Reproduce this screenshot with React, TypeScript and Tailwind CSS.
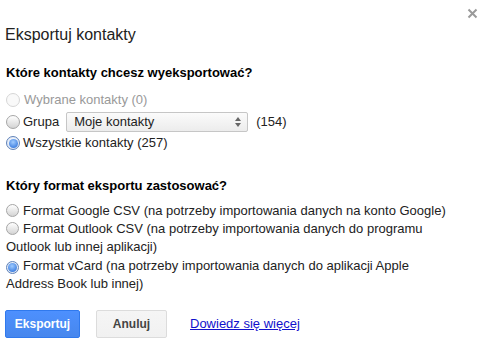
import React from 'react';

function Radio({ checked = false, disabled = false, size = 13 }: { checked?: boolean; disabled?: boolean; size?: number }) {
  const sz = size === 14 ? 'w-[14px] h-[14px]' : 'w-[13px] h-[13px]';
  if (checked) {
    return (
      <span className={`inline-flex ${sz} rounded-full border border-[#5f82b8] bg-[radial-gradient(circle_at_50%_40%,#ffffff,#cfdcf0)] items-center justify-center shrink-0 align-[-2px]`}>
        <span className="w-[9px] h-[9px] rounded-full bg-[radial-gradient(circle_at_45%_35%,#9fcbff,#1f66d6)]" />
      </span>
    );
  }
  return (
    <span
      className={
        disabled
          ? `inline-block ${sz} rounded-full border border-[#d6d6d6] bg-[#f9f9f9] shrink-0 align-[-2px]`
          : `inline-block ${sz} rounded-full border border-[#a6a6a6] bg-[linear-gradient(#ffffff,#d4d4d4)] shrink-0 align-[-2px]`
      }
    />
  );
}

export default function App() {
  return (
    <div
      className="relative w-[484px] h-[345px] bg-white text-[13px] text-[#222] overflow-hidden"
      style={{ fontFamily: '"Liberation Sans", Arial, sans-serif' }}
    >
      <button className="absolute right-[6px] top-[8px] w-[11px] h-[11px]">
        <svg viewBox="0 0 11 11" width="11" height="11">
          <path d="M1.5 1.5 L9.5 9.5 M9.5 1.5 L1.5 9.5" stroke="#9a9a9a" strokeWidth="2" />
        </svg>
      </button>

      <div className="pl-[6px] pr-[30px] pt-[25px]">
        <h1 className="text-[16px] leading-[20px] text-[#222] font-normal -ml-[1px]">Eksportuj kontakty</h1>

        <h2 className="mt-[19px] font-bold leading-[18px] text-[#000]">Które kontakty chcesz wyeksportować?</h2>

        <div className="mt-[8px] flex flex-col">
          <label className="flex items-center h-[20px] text-[#999]">
            <Radio disabled size={14} />
            <span className="ml-[4px]">Wybrane kontakty (0)</span>
          </label>
          <label className="flex items-center h-[23px]">
            <Radio size={14} />
            <span className="ml-[3px]">Grupa</span>
            <span className="ml-[7px] w-[182px] h-[20px] border border-[#c6c6c6] rounded-[2px] bg-[linear-gradient(#fbfbfb,#ececec)] flex items-center justify-between pl-[7px] pr-[6px]">
              <span>Moje kontakty</span>
              <svg width="6" height="10" viewBox="0 0 6 10">
                <path d="M0 4 L3 0 L6 4 Z M0 6 L3 10 L6 6 Z" fill="#666" />
              </svg>
            </span>
            <span className="ml-[8px]">(154)</span>
          </label>
          <label className="flex items-center h-[20px]">
            <Radio checked size={14} />
            <span className="ml-[3px]">Wszystkie kontakty (257)</span>
          </label>
        </div>

        <h2 className="mt-[24px] font-bold leading-[18px] text-[#000]">Który format eksportu zastosować?</h2>

        <div className="mt-[7px] leading-[18px]">
          <label className="block">
            <Radio />
            <span className="ml-[4px]">Format Google CSV (na potrzeby importowania danych na konto Google)</span>
          </label>
          <label className="block">
            <Radio />
            <span className="ml-[4px]">Format Outlook CSV (na potrzeby importowania danych do programu Outlook lub innej aplikacji)</span>
          </label>
          <label className="block mt-[1px]">
            <Radio checked />
            <span className="ml-[4px]">Format vCard (na potrzeby importowania danych do aplikacji Apple Address Book lub innej)</span>
          </label>
        </div>

        <div className="mt-[17px] flex items-center -ml-[1px]">
          <button className="w-[75px] h-[28px] rounded-[2px] border border-[#3079ed] bg-[linear-gradient(#4d90fe,#4787ed)] text-white font-bold text-[12px]">
            Eksportuj
          </button>
          <button className="ml-[16px] w-[71px] h-[28px] rounded-[2px] border border-[#dcdcdc] bg-[linear-gradient(#f5f5f5,#f1f1f1)] text-[#444] font-bold text-[12px]">
            Anuluj
          </button>
          <a href="#" className="ml-[23px] text-[#1111cc] underline">
            Dowiedz się więcej
          </a>
        </div>
      </div>
    </div>
  );
}
